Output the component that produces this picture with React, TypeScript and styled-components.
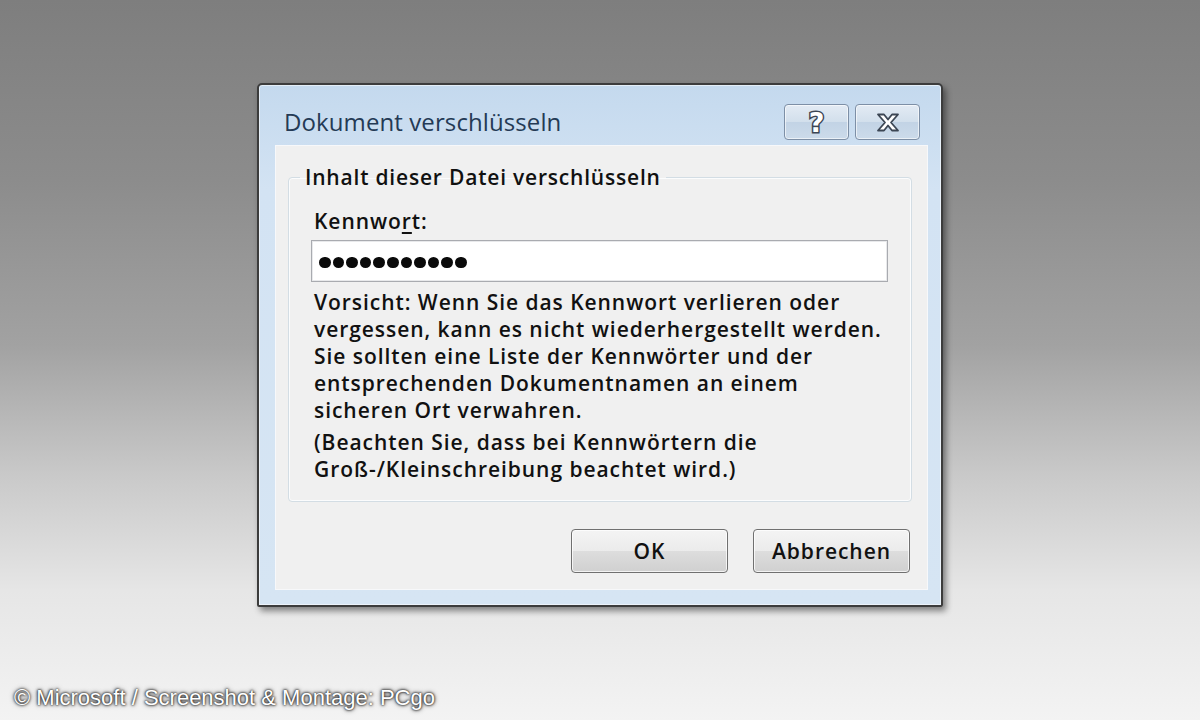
import React from 'react';
import styled, { createGlobalStyle } from 'styled-components';

const GlobalStyle = createGlobalStyle`
  html, body {
    margin: 0;
    padding: 0;
  }
  body {
    font-family: "Open Sans", "Noto Sans", sans-serif;
  }
`;

const Page = styled.div`
  width: 1200px;
  height: 720px;
  box-sizing: border-box;
  padding-top: 83px;
  display: flex;
  flex-direction: column;
  align-items: center;
  overflow: hidden;
  background: linear-gradient(
    to bottom,
    #7e7e7e 0%,
    #8c8c8c 25%,
    #a2a2a2 48%,
    #c9c9c9 66%,
    #e6e6e6 82%,
    #f3f3f3 100%
  );
`;

const Window = styled.div`
  width: 686px;
  height: 524px;
  box-sizing: border-box;
  border: 2px solid #3c3c3c;
  border-radius: 5px 5px 2px 2px;
  background: linear-gradient(to bottom, #c4d9ee 0%, #d3e3f3 20%, #d6e5f3 100%);
  box-shadow: 3px 4px 6px rgba(0, 0, 0, 0.45), inset 0 0 0 1px rgba(255, 255, 255, 0.55);
  display: flex;
  flex-direction: column;
`;

const TitleBar = styled.div`
  height: 62px;
  display: flex;
  align-items: center;
  padding: 0 21px 0 25px;
  box-sizing: border-box;
`;

const Title = styled.div`
  flex: 1;
  font-size: 24px;
  color: #243a55;
  letter-spacing: 0.1px;
  padding-top: 13px;
`;

const CaptionButtons = styled.div`
  display: flex;
  gap: 6px;
  padding-top: 14px;
`;

const CaptionButton = styled.div`
  width: 65px;
  height: 36px;
  box-sizing: border-box;
  border: 1px solid #7d8fa6;
  border-radius: 4px;
  background: linear-gradient(to bottom, #e3ebf4 0%, #d2dfec 50%, #c2d3e5 51%, #ccdbea 100%);
  box-shadow: inset 0 0 0 1px rgba(255, 255, 255, 0.6);
  display: flex;
  align-items: center;
  justify-content: center;
`;

const HelpGlyph = styled.span`
  font-family: "DejaVu Sans", sans-serif;
  font-weight: 700;
  font-size: 27px;
  line-height: 1;
  color: #ffffff;
  -webkit-text-stroke: 3px #3c4654;
  paint-order: stroke fill;
`;

const Client = styled.div`
  flex: 1;
  margin: 0 13px 15px 16px;
  background: #f0f0f0;
  border: 1px solid #f7f8fa;
  box-sizing: border-box;
  padding: 18px 15px 16px 12px;
  display: flex;
  flex-direction: column;
`;

const Group = styled.fieldset`
  margin: 0;
  min-width: 0;
  border: 1px solid #d3dde4;
  border-radius: 4px;
  box-shadow: inset 0 0 0 1px #fbfcfd;
  padding: 17px 23px 18px 22px;
`;

const Legend = styled.legend`
  padding: 0 5px;
  margin-left: -11px;
  font-size: 21px;
  font-weight: 600;
  letter-spacing: 0.8px;
  line-height: 27px;
  color: #111;
`;

const Label = styled.div`
  font-size: 21px;
  font-weight: 600;
  letter-spacing: 0.95px;
  line-height: 27px;
  color: #111;
  padding-left: 3px;
  margin-bottom: 5px;
`;

const Mnemonic = styled.span`
  text-decoration: underline;
  text-underline-offset: 3px;
`;

const PasswordBox = styled.div`
  height: 42px;
  box-sizing: border-box;
  border: 1px solid #a9abb0;
  background: #ffffff;
  box-shadow: inset 0 0 0 1px #e8e9eb;
  display: flex;
  align-items: center;
  gap: 2px;
  padding: 3px 0 0 7px;
`;

const Dot = styled.span`
  width: 11.6px;
  height: 11.6px;
  border-radius: 50%;
  background: #0a0a0a;
`;

const Warning = styled.p<{ $gap?: boolean }>`
  margin: ${(p) => (p.$gap ? '5px' : '7px')} 0 0 3px;
  font-size: 21px;
  font-weight: 600;
  letter-spacing: 0.95px;
  line-height: 27px;
  color: #111;
`;

const ButtonRow = styled.div`
  display: flex;
  justify-content: flex-end;
  gap: 25px;
  margin-top: 27px;
  padding-right: 2px;
`;

const Button = styled.div`
  width: 157px;
  height: 44px;
  box-sizing: border-box;
  border: 1px solid #707070;
  border-radius: 4px;
  background: linear-gradient(to bottom, #f4f4f4 0%, #ebebeb 50%, #dddddd 51%, #d0d0d0 100%);
  box-shadow: inset 0 0 0 1px rgba(255, 255, 255, 0.75);
  display: flex;
  align-items: center;
  justify-content: center;
  font-size: 21px;
  font-weight: 600;
  letter-spacing: 0.95px;
  color: #111;
`;

const Credit = styled.div`
  margin-top: auto;
  align-self: flex-start;
  padding: 0 0 10px 14px;
  font-family: "Liberation Sans", Arial, sans-serif;
  font-size: 22px;
  line-height: 24px;
  color: #ffffff;
  text-shadow: 0 0 2px #1e1e1e, 0 0 3px #333, 0 0 5px #555;
`;

const CloseIcon = () => (
  <svg width="26" height="21" viewBox="0 0 26 20">
    <path
      d="M3 2 L9 2 L13 7 L17 2 L23 2 L16 10 L23 18 L17 18 L13 13 L9 18 L3 18 L10 10 Z"
      fill="#ffffff"
      stroke="#3c4654"
      strokeWidth="1.8"
      strokeLinejoin="round"
    />
  </svg>
);

export default function App() {
  return (
    <>
      <GlobalStyle />
      <Page>
        <Window>
          <TitleBar>
            <Title>Dokument verschlüsseln</Title>
            <CaptionButtons>
              <CaptionButton>
                <HelpGlyph>?</HelpGlyph>
              </CaptionButton>
              <CaptionButton>
                <CloseIcon />
              </CaptionButton>
            </CaptionButtons>
          </TitleBar>
          <Client>
            <Group>
              <Legend>Inhalt dieser Datei verschlüsseln</Legend>
              <Label>
                Kennwo<Mnemonic>r</Mnemonic>t:
              </Label>
              <PasswordBox>
                {Array.from({ length: 11 }).map((_, i) => (
                  <Dot key={i} />
                ))}
              </PasswordBox>
              <Warning>
                Vorsicht: Wenn Sie das Kennwort verlieren oder
                <br />
                vergessen, kann es nicht wiederhergestellt werden.
                <br />
                Sie sollten eine Liste der Kennwörter und der
                <br />
                entsprechenden Dokumentnamen an einem
                <br />
                sicheren Ort verwahren.
              </Warning>
              <Warning $gap>
                (Beachten Sie, dass bei Kennwörtern die
                <br />
                Groß-/Kleinschreibung beachtet wird.)
              </Warning>
            </Group>
            <ButtonRow>
              <Button>OK</Button>
              <Button>Abbrechen</Button>
            </ButtonRow>
          </Client>
        </Window>
        <Credit>© Microsoft / Screenshot &amp; Montage: PCgo</Credit>
      </Page>
    </>
  );
}
